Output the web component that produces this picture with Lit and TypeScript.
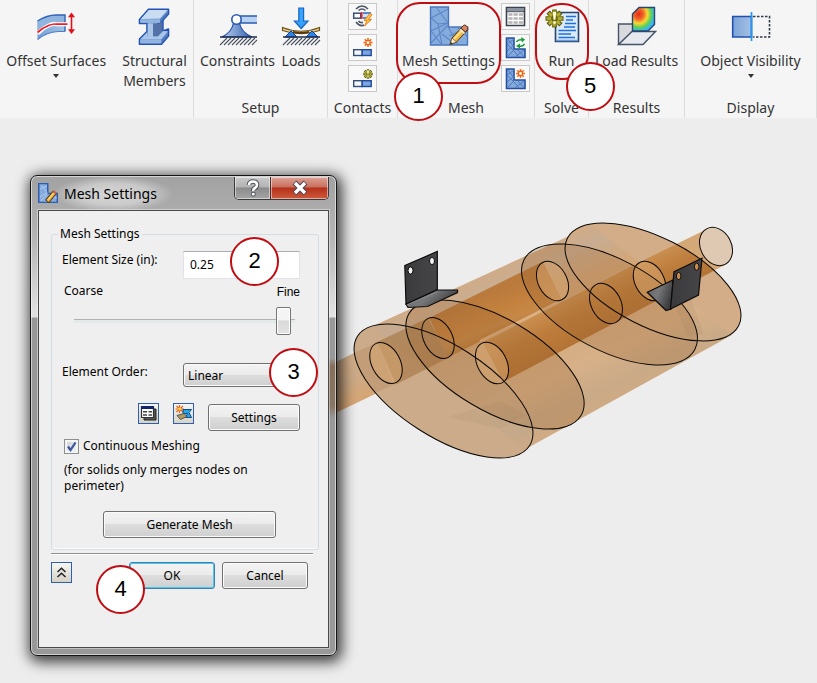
import { LitElement, html, css, svg } from "lit";
import { customElement, property, state } from "lit/decorators.js";

/* ---------- icons ---------- */

const hatch = svg`
  <path d="M2 31H39" stroke="#1d2a4a" stroke-width="1.4"/>
  <path d="M2 39l7-7M6 39l7-7M10 39l7-7M14 39l7-7M18 39l7-7M22 39l7-7M26 39l7-7M30 39l7-7M34 39l5-5" stroke="#4a5260" stroke-width="1.1"/>`;

const spark = (cx: number, cy: number) => svg`
  <g transform="translate(${cx} ${cy})" stroke="#f0701a" stroke-width="1.6">
    <path d="M0-4.500V4.500M-4.500 0H4.500M-3.200-3.200L3.200 3.200M-3.200 3.200L3.200-3.200"/>
    <circle r="2.2" fill="#fff2c8" stroke="#f05a14" stroke-width="1.2"/>
  </g>`;

const gearMark = (cx: number, cy: number, k: number) => svg`
  <g transform="translate(${cx} ${cy}) scale(${k})">
    <path d="M0-9V9M-9 0H9M-6.4-6.4L6.4 6.4M-6.4 6.4L6.4-6.4" stroke="#5f5a10" stroke-width="4.6"/>
    <circle r="6.6" fill="#8d8a1c"/>
    <path d="M0-8V8M-8 0H8M-5.6-5.6L5.6 5.6M-5.6 5.6L5.6-5.6" stroke="#b3b036" stroke-width="2.4"/>
    <circle r="3.4" fill="#6b6812"/>
    <path d="M-1.7-6.5H1.7L1 1.2H-1z" fill="#fffbd0"/>
    <circle cy="4" r="1.4" fill="#fffbd0"/>
  </g>`;

const contactPair = svg`
  <rect x="2.700" y="14.700" width="8.500" height="5.800" fill="#f4f6fb" stroke="#35507c" stroke-width="1.4"/>
  <rect x="11.200" y="14.700" width="9" height="5.800" fill="#7da4e0" stroke="#1c4a9c" stroke-width="1.4"/>`;

const meshL = (extra: unknown) => svg`
  <path d="M2.500 3h7.500v11h11v8.500H2.500z" fill="#84a9dc" stroke="#24509f" stroke-width="1.6"/>
  <path d="M3 9l7-5M3 16l7-6M4 4l6 8M3 9l8 8 4 5M3 22l8-8M11 22l9-7M14 15l6 7" stroke="#4e7bc0" stroke-width="1" fill="none"/>
  ${extra}`;

const pencil = svg`
  <path d="M21 38.5l2-6.5 11.5-12.5 4.5 4L27.500 36z" fill="#f4b73c" stroke="#4c3514" stroke-width="1"/>
  <path d="M24.800 33.500L35.500 21.500" stroke="#ffe39a" stroke-width="1.8"/>
  <path d="M32 22.200l2.600-2.800q1-1.200 3 .6t1.200 3.200l-2.500 2.700z" fill="#d9826c" stroke="#4c3514"/>
  <path d="M30.800 23.500l4.600 4" stroke="#e8e8e8" stroke-width="1.6"/>
  <path d="M23 32l4.500 4-6.500 2.500z" fill="#fbeccb" stroke="#6b5020" stroke-width=".7"/>
  <path d="M21 38.500l.8-2.600 1.800 1.600z" fill="#222"/>`;

const bigMesh = svg`
  <path d="M1.500 1h18v20h19v18H1.500z" fill="#86abdd" stroke="#4a76bb" stroke-width="1.400"/>
  <path d="M2 12l17-9M7 1l12 16M2 12l7 6 10-1M2 25l17-8M9 18l4 21M2 25l11 14M2 37l17-18M13 28l14 11M19 21l10 18M20 30l18-8M28 21l10 9" stroke="#5c87c7" stroke-width="1.100" fill="none"/>`;

const big: Record<string, unknown> = {
  offset: svg`
    <defs><linearGradient id="os" x1="0" y1="1" x2="1" y2="0"><stop offset="0" stop-color="#6d9bd2"/><stop offset="1" stop-color="#b9d2ec"/></linearGradient></defs>
    <path d="M1.500 15Q11 9 20 9H29V25.500H22Q11 26 1.500 33.500z" fill="url(#os)"/>
    <path d="M1.500 15Q11 9 20 9H29V16.500H20Q11 17 1.500 24z" fill="#8fb4de"/>
    <path d="M1.500 15Q11 9 20 9H29V25.500" fill="none" stroke="#2f62b8" stroke-width="1.400"/>
    <path d="M1.500 33.500Q11 26 22 25.500H29" fill="none" stroke="#4f7fc6" stroke-width="1.200"/>
    <path d="M1.500 27.500Q7 22 12.500 19.500T20 18.200H31.500" fill="none" stroke="#fff" stroke-width="4"/>
    <path d="M1.500 26.500Q7 21.500 12.500 19.500T20 18.200H31.500" fill="none" stroke="#f01c24" stroke-width="1.700"/>
    <path d="M35.500 10V26" stroke="#e0101c" stroke-width="1.600"/>
    <path d="M35.500 6.500l3.500 4.700h-7zM35.500 28l3.500-4.700h-7z" fill="#e0101c"/>`,
  beam: svg`
    <path d="M5.500 13.500L14.500 3.200H34.500V8L26 17.500H24V26H26L34.500 23V30L27.500 38.200H5.500V33L13 25.500V17.500H5.500z" fill="#7c9fd2" stroke="#2253b4" stroke-width="1.600" stroke-linejoin="round"/>
    <path d="M6.800 13L14.800 4H33.500L26 12.500z" fill="#c9dcf2"/>
    <path d="M6.200 13.500H26V16.800H6.200z" fill="#92b4e0"/>
    <path d="M26 13.500L33.800 5V8L26 16.800z" fill="#4d78bb"/>
    <path d="M18.500 17.500H25.500L29 14V25L24 30.500H18.500z" fill="#5272a8"/>
    <path d="M29 14V25" stroke="#2253b4" stroke-width="1.400"/>
    <path d="M13.700 17.500H19V31H13.700z" fill="#a9c5e8"/>
    <path d="M13 26.500L6.500 33H27.500L33.500 25.500 29 25 24 30.500H13z" fill="#a9c6ea"/>
    <path d="M6.200 33.500H27V37.300H6.200z" fill="#92b4e0"/>
    <path d="M27.500 33.500L33.800 26.500V30L27.500 37.300z" fill="#4d78bb"/>`,
  constraint: svg`
    <defs><linearGradient id="cn" x1="0" x2="1"><stop offset="0" stop-color="#bcd0ee"/><stop offset="1" stop-color="#3262ad"/></linearGradient></defs>
    <path d="M20 10H39V17H20z" fill="#b8d2f2"/>
    <path d="M22 10H39M22 17H39" stroke="#2a5cb4" stroke-width="1.500"/>
    <path d="M4 31Q14 26 15.500 17H21.500Q23 26 34 31z" fill="url(#cn)" stroke="#2550a8" stroke-width="1.200"/>
    <circle cx="18.500" cy="13.500" r="4.700" fill="#fff" stroke="#2858b2" stroke-width="1.600"/>
    ${hatch}`,
  load: svg`
    <path d="M1.500 21.500Q20 29 38.500 21.500V24.500Q20 31 1.500 24.500z" fill="#e9cf94" stroke="#6f5418" stroke-width="1.200"/>
    <path d="M12 26Q20 28 28 26" stroke="#5a3a10" stroke-width="2" fill="none"/>
    <path d="M4 31L10 25 16 31zM25 31L31 25 37 31z" fill="#2f86ea" stroke="#12459c" stroke-width="1"/>
    <path d="M17.800 2H22.600V15H27L20.200 22.500 13.400 15H17.800z" fill="#36a2fa" stroke="#1766c4" stroke-width="1.200"/>
    ${hatch}`,
  mesh: svg`${bigMesh}${pencil}`,
  run: svg`
    <path d="M12.500 6.500H36.500V35.500H13.500V20z" fill="#d9e9fa" stroke="#27466f" stroke-width="1.600"/>
    <path d="M14 34.500H36" stroke="#6f9bd6" stroke-width="1.500"/>
    <path d="M24 10.500H34M24 14H31M23 17.500H34M22 21H33M16.500 24.500H34M16.500 28H29M16.500 31.500H33" stroke="#1e70e2" stroke-width="1.500"/>
    ${gearMark(12.5, 12.5, 1)}`,
  results: svg`
    <defs><radialGradient id="rs" cx=".28" cy=".28" r="1"><stop offset="0" stop-color="#e22a18"/><stop offset=".22" stop-color="#f0662a"/><stop offset=".4" stop-color="#f8d832"/><stop offset=".58" stop-color="#58cf5a"/><stop offset=".72" stop-color="#3cb8f0"/><stop offset="1" stop-color="#2a7af0"/></radialGradient></defs>
    <path d="M1.500 18H20V27L1.500 38z" fill="#d8dade" stroke="#44536a" stroke-width="1.400"/>
    <path d="M1.500 38.500L15 25.500H38.500L26 38.500z" fill="#e6e9ee" stroke="#44536a" stroke-width="1.500"/>
    <path d="M15.500 8L22 1.500H37.500V18.500L31 25H15.500z" fill="url(#rs)" stroke="#27466f" stroke-width="1.400"/>`,
  visibility: svg`
    <defs><linearGradient id="ov" x1="0" x2="1"><stop offset="0" stop-color="#7ba4d8"/><stop offset="1" stop-color="#a5c1e4"/></linearGradient></defs>
    <path d="M1.700 10.500H20.500V31H1.700z" fill="url(#ov)" stroke="#2350b0" stroke-width="1.600"/>
    <path d="M22 10.500H38.500V31H22" fill="none" stroke="#333b48" stroke-width="1.600" stroke-dasharray="2.500 1.500"/>
    <path d="M20.500 6V35" stroke="#2196f3" stroke-width="1.700"/>`,
};

const small: Record<string, unknown> = {
  autoContact: svg`
    <path d="M5 5Q11-1 17 5M7.500 6.500Q11 3.500 14.500 6.500M5 18Q9 23 13 21M7.500 17Q9 19 12 18.500" stroke="#4c5563" stroke-width="1.600" fill="none"/>
    <rect x="2.700" y="9.200" width="7" height="5" fill="#fff" stroke="#3b527c" stroke-width="1.500"/>
    <path d="M12 8.500H20V14.500H12z" fill="#cfe2f7"/><path d="M12 9H20M12 14H17" stroke="#2d69c5" stroke-width="1.300"/>
    <path d="M10.800 8V15" stroke="#f01818" stroke-width="1.600"/>
    <path d="M19 9.500L13 16.500H16L13.500 22 20.500 15.500H17.500L21 10.500z" fill="#ffc34d" stroke="#e57a12" stroke-width=".9"/>`,
  newContact: svg`${contactPair}${spark(17, 7.5)}`,
  manualContact: svg`${contactPair}${gearMark(17, 8, 0.52)}`,
  table: svg`
    <path d="M2.500 3.500H20.500V21.500H2.500z" fill="#fff" stroke="#39424e" stroke-width="1.600"/>
    <path d="M3 4H20V7H3z" fill="#8a939f"/><path d="M2 7.700H21" stroke="#39424e" stroke-width="1"/>
    <path d="M4.300 10.500H8.500M9.500 10.500H13.800M14.800 10.500H19M4.300 14.500H8.500M9.500 14.500H13.800M14.800 14.500H19M4.300 18.500H8.500M9.500 18.500H13.800M14.800 18.500H19" stroke="#b4b4b4" stroke-width="2.600"/>`,
  meshRefresh: meshL(svg`
    <path d="M12.500 7Q14 4 18 5" stroke="#1c9a3a" stroke-width="1.600" fill="none"/><path d="M17 2L21 4.500 18 7.500z" fill="#1c9a3a"/>
    <path d="M20.500 9Q18.500 12 15 11" stroke="#1c9a3a" stroke-width="1.600" fill="none"/><path d="M16 8.500L12 11 16 13.500z" fill="#1c9a3a"/>`),
  meshNew: meshL(spark(16.5, 7.5)),
};

/* ---------- callout ---------- */

@customElement("step-mark")
class StepMark extends LitElement {
  @property() n = "";
  static styles = css`
    :host {
      position: absolute;
      z-index: 5;
      box-sizing: border-box;
      width: 49px;
      height: 49px;
      border: 2px solid #c00d12;
      border-radius: 50%;
      background: #fff;
      color: #000;
      font: 22px/44px "Liberation Sans", Arial, sans-serif;
      text-align: center;
      pointer-events: none;
    }
  `;
  render() {
    return html`${this.n}`;
  }
}

/* ---------- ribbon ---------- */

@customElement("ribbon-bar")
class RibbonBar extends LitElement {
  static styles = css`
    :host {
      display: grid;
      grid-template-columns: 194fr 134fr 70fr 137fr 54fr 96fr 132fr;
      min-height: 118px;
      background: #f5f5f5;
      position: relative;
      z-index: 2;
      font: 14px/20px "Noto Sans", "Open Sans", sans-serif;
      color: #333;
    }
    .group {
      display: flex;
      flex-direction: column;
      justify-content: space-between;
      border-right: 1px solid #dcdcdc;
      min-width: 0;
    }
    .tools {
      display: flex;
      justify-content: center;
      gap: 6px;
    }
    .wide {
      gap: 16px;
    }
    .caption {
      text-align: center;
      white-space: nowrap;
    }
    .slot {
      position: relative;
      padding-top: 6px;
    }
    .tool {
      display: flex;
      flex-direction: column;
      align-items: center;
      min-width: 40px;
      padding: 0;
      border: 0;
      background: none;
      color: inherit;
      font: inherit;
      white-space: pre-line;
    }
    .tool svg {
      width: 40px;
      height: 40px;
      margin-bottom: 5px;
      fill: none;
    }
    .drop {
      border: 3px solid transparent;
      border-top: 4px solid #333;
      border-bottom: 0;
      margin-top: 3px;
    }
    .stack {
      display: flex;
      flex-direction: column;
      gap: 4px;
      padding-top: 3px;
    }
    .mini {
      display: flex;
      align-items: center;
      justify-content: center;
      width: 29px;
      height: 27px;
      padding: 0;
      border: 1px solid #c9c9c9;
      background: #f9f9f9;
    }
    .mini svg {
      width: 23px;
      height: 25px;
      fill: none;
    }
    .ring {
      position: absolute;
      box-sizing: border-box;
      border: 2px solid #c00d12;
      pointer-events: none;
      z-index: 3;
    }
    .ring-mesh {
      inset: 2px -6px auto -6px;
      height: 82px;
      border-radius: 24px;
    }
    .ring-run {
      inset: 3px -7px auto -7px;
      height: 77px;
      border-radius: 26px;
    }
    .mark-mesh {
      left: -8px;
      top: 72px;
    }
    .mark-run {
      left: 24px;
      top: 62px;
    }
  `;
  private tool(icon: string, label: string, drop = false) {
    return html`<button class="tool" type="button">
      <svg viewBox="0 0 40 40" aria-hidden="true">${big[icon]}</svg><span>${label}</span>${drop ? html`<i class="drop"></i>` : ""}
    </button>`;
  }
  private stack(items: [string, string][]) {
    return html`<div class="stack">
      ${items.map(
        ([icon, name]) => html`<button class="mini" type="button" aria-label=${name}><svg viewBox="0 0 23 25">${small[icon]}</svg></button>`,
      )}
    </div>`;
  }
  render() {
    return html`
      <div class="group">
        <div class="tools wide">
          <div class="slot">${this.tool("offset", "Offset Surfaces", true)}</div>
          <div class="slot">${this.tool("beam", "Structural\nMembers")}</div>
        </div>
      </div>
      <div class="group">
        <div class="tools">
          <div class="slot">${this.tool("constraint", "Constraints")}</div>
          <div class="slot">${this.tool("load", "Loads")}</div>
        </div>
        <div class="caption">Setup</div>
      </div>
      <div class="group">
        <div class="tools">
          ${this.stack([["autoContact", "Automatic contacts"], ["newContact", "New contact"], ["manualContact", "Manual contact"]])}
        </div>
        <div class="caption">Contacts</div>
      </div>
      <div class="group">
        <div class="tools">
          <div class="slot">
            ${this.tool("mesh", "Mesh Settings")}
            <span class="ring ring-mesh"></span>
            <step-mark class="mark-mesh" n="1"></step-mark>
          </div>
          ${this.stack([["table", "Mesh table"], ["meshRefresh", "Update mesh"], ["meshNew", "Generate mesh"]])}
        </div>
        <div class="caption">Mesh</div>
      </div>
      <div class="group">
        <div class="tools">
          <div class="slot">
            ${this.tool("run", "Run")}
            <span class="ring ring-run"></span>
            <step-mark class="mark-run" n="5"></step-mark>
          </div>
        </div>
        <div class="caption">Solve</div>
      </div>
      <div class="group">
        <div class="tools"><div class="slot">${this.tool("results", "Load Results")}</div></div>
        <div class="caption">Results</div>
      </div>
      <div class="group">
        <div class="tools"><div class="slot">${this.tool("visibility", "Object Visibility", true)}</div></div>
        <div class="caption">Display</div>
      </div>
    `;
  }
}

/* ---------- 3D model ---------- */

type Oval = [number, number, number, number, number];
const tubeEnds: Oval[] = [
  [443.5, 391, 102, 45.6, 32.5],
  [495, 364.5, 100, 46, 30.7],
  [609.5, 304.5, 96.5, 45.7, 27.8],
  [653, 282, 96.2, 44.3, 27.1],
];
const holes: Oval[] = [
  [386, 363, 22, 14.2, 62],
  [438, 338, 22, 14.2, 62],
  [492, 363, 22.2, 14.6, 62],
  [552.5, 281, 21, 14.4, 62],
  [606, 303.5, 21.4, 14.8, 62],
  [649.5, 281, 21, 14.6, 62],
  [716, 246.5, 20, 15.4, 62],
];
const oval = ([cx, cy, a, b, r]: Oval, cls: string) =>
  svg`<ellipse class=${cls} cx=${cx} cy=${cy} rx=${a} ry=${b} transform="rotate(${r} ${cx} ${cy})"></ellipse>`;

@customElement("model-view")
class ModelView extends LitElement {
  static styles = css`
    :host,
    .scene {
      display: block;
    }
    .scene {
      width: 100%;
      height: auto;
    }
    .skin {
      fill: #d2ad88;
    }
    .edge {
      fill: none;
      stroke: #0a0805;
      stroke-width: 1;
    }
    .cap {
      fill: #96612d;
      fill-opacity: 0.26;
    }
    .near {
      fill: #a8a49c;
      fill-opacity: 0.14;
    }
    .bore {
      fill: #d8a872;
      fill-opacity: 0.5;
    }
    .tip {
      fill: #dfc9b3;
    }
    .plate {
      fill: url(#steel);
      stroke: #0c0c0c;
      stroke-width: 1.2;
    }
    .flange {
      fill: url(#steel2);
      stroke: #0c0c0c;
      stroke-width: 1.2;
    }
  `;
  render() {
    const [a, b, c, d] = tubeEnds;
    return html`<svg class="scene" viewBox="0 118 817 565" role="img" aria-label="Tube assembly with brackets">
      <defs>
        <linearGradient id="rod" gradientUnits="userSpaceOnUse" x1="485" y1="295" x2="503" y2="338">
          <stop offset="0" stop-color="#b97a3c" /><stop offset=".4" stop-color="#c4813e" />
          <stop offset=".7" stop-color="#c68846" /><stop offset="1" stop-color="#b57637" />
        </linearGradient>
        <linearGradient id="rod2" gradientUnits="userSpaceOnUse" x1="560" y1="306" x2="580" y2="345">
          <stop offset="0" stop-color="#c88c4c" /><stop offset=".4" stop-color="#bd7c3b" /><stop offset="1" stop-color="#b37334" />
        </linearGradient>
        <linearGradient id="stub" gradientUnits="userSpaceOnUse" x1="350" y1="355" x2="370" y2="395">
          <stop offset="0" stop-color="#d4b08b" /><stop offset=".5" stop-color="#ccaa86" /><stop offset="1" stop-color="#d6a574" />
        </linearGradient>
        <linearGradient id="tube" gradientUnits="userSpaceOnUse" x1="480" y1="270" x2="560" y2="440">
          <stop offset="0" stop-color="#d2ab84" /><stop offset=".12" stop-color="#c9ad92" /><stop offset=".3" stop-color="#d3a677" />
          <stop offset=".68" stop-color="#d7b088" /><stop offset=".86" stop-color="#c9aa87" /><stop offset="1" stop-color="#d5ab81" />
        </linearGradient>
        <linearGradient id="steel" x1="0" x2="1"><stop offset="0" stop-color="#3a3a3c" /><stop offset="1" stop-color="#464648" /></linearGradient>
        <linearGradient id="steel2" x1="0" x2="1" y2=".4"><stop offset="0" stop-color="#606062" /><stop offset=".5" stop-color="#77787a" /><stop offset="1" stop-color="#3c3c3e" /></linearGradient>
        <clipPath id="inA"><ellipse cx="443.500" cy="391" rx="102" ry="45.600" transform="rotate(32.500 443.500 391)" /></clipPath>
        <clipPath id="inTube">
          <path d="M372 326L592 225.500 653 282 690 330 524 450z" />
          <ellipse cx="653" cy="282" rx="96.200" ry="44.300" transform="rotate(27.100 653 282)" />
        </clipPath>
      </defs>

      <path d="M300 380L377 341.500 396 384 300 430z" fill="url(#stub)" />
      <path d="M640 262L706 229.500 727 264 655 300z" fill="#d5a878" />
      ${oval(a, "skin")}${oval(d, "skin")}
      <path d="M372 326.500L592 225.500 732 335 524 450z" fill="url(#tube)" />

      <path d="M377 342L428 318 449 357.500 396 384.500z" fill="#a9763f" fill-opacity=".72" />
      <path d="M340 360L377 342 394 384.500 340 409z" fill="#b07a42" fill-opacity=".3" clip-path="url(#inA)" />
      <path d="M429 318L543 261.500 562 300 448 357.500z" fill="url(#rod)" />
      <path d="M483 342.500L640 262 712 226.500 727 264 658 300 503 382z" fill="url(#rod2)" clip-path="url(#inTube)" />
      <path d="M480 341L558 302" stroke="#deb184" stroke-width="2" />
      <path d="M448 417L500 401 527 415 500 429z" fill="#8f7a5e" fill-opacity=".12" />
      <path d="M674 305L690 297 704 334 688 336z" fill="#8a7a66" fill-opacity=".12" />

      ${oval(a, "near")}${oval(b, "cap")}${oval(c, "cap")}
      ${[0, 2, 3, 5].map((i) => oval(holes[i], "bore"))}
      ${oval(holes[6], "tip")}
      ${[a, b, c, d].map((o) => oval(o, "edge"))}
      ${holes.map((o) => oval(o, "edge"))}

      <path class="flange" d="M406 304L436.500 290H457.500V292.500L427.500 306.500 408 307.500z" />
      <path class="plate" d="M404.800 265.500L437.300 251.500V289.500L406 304z" />
      <path d="M407 305L437 292" stroke="#8a8a8c" />
      <ellipse cx="410.500" cy="270.500" rx="2.500" ry="3.600" fill="#f4f4f4" stroke="#0c0c0c" />
      <ellipse cx="432" cy="261" rx="2.500" ry="3.600" fill="#f4f4f4" stroke="#0c0c0c" />

      <path class="flange" d="M647.300 292.300L673 280 671 309 666 310.500z" />
      <path class="plate" d="M674 271.700L702 258.300 698.500 295 670.500 309z" />
      <ellipse cx="678.700" cy="276" rx="2.300" ry="3.600" fill="#c98b4c" stroke="#0c0c0c" />
      <ellipse cx="696.700" cy="266.700" rx="2.300" ry="3.600" fill="#c98b4c" stroke="#0c0c0c" />
    </svg>`;
  }
}

/* ---------- dialog ---------- */

@customElement("mesh-dialog")
class MeshDialog extends LitElement {
  @state() private continuous = true;
  static styles = css`
    :host {
      display: block;
      box-sizing: border-box;
      width: 307px;
      padding: 0 7px 7px;
      border: 1px solid #141414;
      border-radius: 7px;
      background:
        linear-gradient(rgba(125, 95, 65, 0), rgba(125, 95, 65, 0.7) 8px, rgba(125, 95, 65, 0.6) 48px, rgba(125, 95, 65, 0)) right 182px / 7px 60px no-repeat,
        radial-gradient(60px 18px at 82px 18px, rgba(235, 235, 235, 0.7), rgba(235, 235, 235, 0.5) 60%, transparent) 0 0 / 100% 34px no-repeat,
        linear-gradient(#a2a2a2, #acacac 34px, #b4b4b4 60px, #e2e2e2 141px, #989898 142px);
      box-shadow:
        inset 0 0 0 1px rgba(255, 255, 255, 0.55),
        2px 3px 14px 3px rgba(0, 0, 0, 0.75);
      font: 12px/16px "Noto Sans", "DejaVu Sans", sans-serif;
      color: #000;
    }
    .title {
      display: flex;
      height: 34px;
      align-items: flex-start;
    }
    .title svg {
      width: 20px;
      height: 20px;
      margin-top: 7px;
      fill: none;
    }
    .title h1 {
      flex: 1;
      margin: 0;
      padding: 8px 0 0 6px;
      font-size: 14px;
      line-height: 20px;
      font-weight: 400;
    }
    .sys {
      display: flex;
      box-sizing: border-box;
      margin-top: 1px;
      border: 1px solid #3a3a3a;
      border-top: 0;
      border-radius: 0 0 5px 5px;
      overflow: hidden;
    }
    .sys button {
      display: flex;
      align-items: center;
      justify-content: center;
      padding: 0;
      border: 0;
      height: 22px;
      width: 35px;
      background: linear-gradient(#c9c9c9, #b4b4b4 45%, #8b8b8b 50%, #a5a5a5);
      box-shadow: inset 0 0 0 1px rgba(255, 255, 255, 0.5);
    }
    .sys .close {
      width: 58px;
      border-left: 1px solid #4a2a26;
      background: linear-gradient(#dca296, #c9705f 45%, #b5301a 50%, #cf5a3c);
    }
    .sys svg {
      width: 16px;
      height: 18px;
      margin: 0;
      fill: none;
    }
    .client {
      box-sizing: border-box;
      min-height: 438px;
      padding: 15px 9px 0 12px;
      border: 1px solid #4a4a4a;
      background: #efefef;
      box-shadow: 0 0 0 1px rgba(255, 255, 255, 0.4);
    }
    fieldset {
      margin: 0;
      padding: 0 18px 11px 10px;
      border: 1px solid #d3dde6;
      border-radius: 3px;
      min-width: 0;
      box-shadow: inset 0 -1px 0 #fff;
    }
    legend {
      margin-left: -4px;
      padding: 0 2px;
    }
    .row {
      display: flex;
      align-items: flex-start;
      justify-content: space-between;
    }
    .size {
      padding-top: 9px;
    }
    .row > label {
      padding-top: 1px;
    }
    .size input {
      box-sizing: border-box;
      width: 117px;
      height: 28px;
      padding: 0 6px 2px;
      border: 1px solid #e2e3ea;
      border-top-color: #abadb3;
      background: #fff;
      color: inherit;
      font: inherit;
    }
    .field {
      position: relative;
      display: flex;
    }
    .ends {
      padding: 3px 0 0 2px;
    }
    .fine {
      font: 12px/20px "Liberation Sans", Arial, sans-serif;
    }
    .slider {
      display: block;
      appearance: none;
      width: 221px;
      height: 28px;
      margin: 5px 0 0 12px;
      background: linear-gradient(#b0b2b4, #b0b2b4) 0 12px / 100% 1px no-repeat, linear-gradient(#e4eaea, #e4eaea) 0 13px / 100% 3px no-repeat;
    }
    .slider::-webkit-slider-thumb {
      appearance: none;
      box-sizing: border-box;
      width: 15px;
      height: 28px;
      border: 1px solid #757575;
      border-radius: 2px;
      background: linear-gradient(#f4f4f4 45%, #dadada 50%, #e2e2e2);
      box-shadow: inset 0 0 0 1px #fff;
    }
    .order {
      padding-top: 28px;
    }
    select,
    .btn {
      appearance: none;
      box-sizing: border-box;
      border: 1px solid #707070;
      border-radius: 3px;
      background: linear-gradient(#f3f3f3, #ebebeb 49%, #dddddd 50%, #cfcfcf);
      box-shadow: inset 0 0 0 1px #fbfbfb;
      color: inherit;
      font: inherit;
    }
    select {
      width: 117px;
      height: 24px;
      padding: 1px 4px 0;
    }
    .btn {
      height: 27px;
      padding: 1px 0 0;
    }
    .more {
      justify-content: flex-end;
      padding-top: 16px;
      gap: 14px;
    }
    .settings {
      width: 92px;
      margin-top: 1px;
    }
    .chip {
      box-sizing: border-box;
      display: flex;
      width: 21px;
      height: 21px;
      padding: 0;
      border: 1px solid #2f5fae;
      background: linear-gradient(#f6f6f2, #d6d3c6);
    }
    .chip svg {
      width: 19px;
      height: 19px;
      fill: none;
    }
    .tick {
      display: flex;
      align-items: center;
      gap: 4px;
      padding: 7px 0 8px 2px;
      position: relative;
    }
    .tick input {
      appearance: none;
      box-sizing: border-box;
      width: 15px;
      height: 15px;
      margin: 0;
      border: 1px solid #8e8f8f;
      background: linear-gradient(135deg, #cbcfd5, #f6f6f6);
      box-shadow: inset 0 0 0 2px #f4f4f4;
    }
    .tick svg {
      position: absolute;
      left: 2px;
      width: 15px;
      height: 15px;
      fill: none;
      pointer-events: none;
    }
    .note {
      margin: 0;
      padding-left: 2px;
    }
    .generate {
      display: block;
      width: 173px;
      margin: 17px auto 0 41px;
    }
    hr {
      margin: 3px 6px 7px 0;
      border: 0;
      border-top: 1px solid #8f8f8f;
      border-bottom: 1px solid #fff;
    }
    .actions {
      display: flex;
      gap: 7px;
      padding-right: 11px;
    }
    .actions .chip {
      margin-right: auto;
    }
    .actions .btn {
      width: 86px;
    }
    .actions .ok {
      border-color: #3c7fb1;
      box-shadow: inset 0 0 0 1px #4cc8ee;
    }
    .mark-size {
      left: 47px;
      top: -14px;
    }
    .mark-order {
      left: 86px;
      top: -15px;
    }
    .mark-ok {
      left: -33px;
      top: 3px;
    }
  `;
  render() {
    return html`
      <div class="title">
        <svg viewBox="0 0 40 40" aria-hidden="true">
          <path d="M1.500 1h18v20h19v18H1.500z" fill="#86abdd" stroke="#2f5fb0" stroke-width="3" />
          <path d="M4 12l14-6M6 4l12 14M4 28l15-9M6 36l13-15M24 26l14 4" stroke="#b9d2f2" stroke-width="1.500" />
          <path d="M18 37L34 18" stroke="#4c3514" stroke-width="10" />
          <path d="M19 36L34 18" stroke="#f4b73c" stroke-width="6" />
          <path d="M20 33L31 20" stroke="#ffe9a8" stroke-width="2" />
          <path d="M32 20.500L35 17" stroke="#c8604c" stroke-width="7" />
        </svg>
        <h1>Mesh Settings</h1>
        <div class="sys">
          <button type="button" aria-label="Help">
            <svg viewBox="0 0 16 18"><path d="M4 6Q4 2.500 8 2.500T12 6Q12 8 10 9T8.300 12" stroke="#50545e" stroke-width="4.600" /><circle cx="8.300" cy="15.200" r="2.400" fill="#50545e" /><path d="M4 6Q4 2.500 8 2.500T12 6Q12 8 10 9T8.300 12" stroke="#fff" stroke-width="2.600" /><circle cx="8.300" cy="15.200" r="1.400" fill="#fff" /></svg>
          </button>
          <button class="close" type="button" aria-label="Close">
            <svg viewBox="0 0 16 18"><path d="M2.500 3.500L13.500 14.500M13.500 3.500L2.500 14.500" stroke="#4e4a58" stroke-width="5.400" /><path d="M3 4L13 14M13 4L3 14" stroke="#fff" stroke-width="3.200" /></svg>
          </button>
        </div>
      </div>
      <div class="client">
        <fieldset>
          <legend>Mesh Settings</legend>
          <div class="row size">
            <label for="size">Element Size (in):</label>
            <div class="field">
              <input id="size" type="text" value="0.25" />
              <step-mark class="mark-size" n="2"></step-mark>
            </div>
          </div>
          <div class="row ends"><label for="grade">Coarse</label><span class="fine">Fine</span></div>
          <input class="slider" id="grade" type="range" min="0" max="100" value="98" />
          <div class="row order">
            <label for="order">Element Order:</label>
            <div class="field">
              <select id="order"><option>Linear</option><option>Parabolic</option></select>
              <step-mark class="mark-order" n="3"></step-mark>
            </div>
          </div>
          <div class="row more">
            <button class="chip" type="button" aria-label="Mesh table">
              <svg viewBox="0 0 19 19"><path d="M5 5H17V16H5z" fill="#555" stroke="#222" /><path d="M2.500 2.500H14.500V13.500H2.500z" fill="#fff" stroke="#333" stroke-width="1.200" /><path d="M2 2H15V5H2z" fill="#12246e" /><path d="M4 7.700H8M9.500 7.700H13M4 11H8M9.500 11H13" stroke="#444" stroke-width="1.400" /></svg>
            </button>
            <button class="chip" type="button" aria-label="New mesh">
              <svg viewBox="0 0 19 19"><path d="M5.500 1V9M1.500 5H10M2.500 2L9 8M9 2L2.500 8" stroke="#ee5a14" stroke-width="1.100" /><circle cx="5.700" cy="5" r="1.600" fill="#ffd84a" /><path d="M9 5.500H17.500L15 8.500 17.500 13.500H11.500L13.500 9.500H9z" fill="#28a6e4" stroke="#0c4a92" /><path d="M3 11.500L10 9.500 13 12.500 6.500 15.500z" fill="#b59a5a" stroke="#3a4a5c" stroke-width=".9" /></svg>
            </button>
            <button class="btn settings" type="button">Settings</button>
          </div>
          <label class="tick">
            <input type="checkbox" .checked=${this.continuous} @change=${(e: Event) => (this.continuous = (e.target as HTMLInputElement).checked)} />
            <svg viewBox="0 0 15 15">${this.continuous ? svg`<path d="M4 7.500L6.500 11 11.500 3.500" stroke="#3a539c" stroke-width="2.200"/>` : ""}</svg>
            Continuous Meshing
          </label>
          <p class="note">(for solids only merges nodes on<br />perimeter)</p>
          <button class="btn generate" type="button">Generate Mesh</button>
        </fieldset>
        <hr />
        <div class="actions">
          <button class="chip" type="button" aria-label="Collapse">
            <svg viewBox="0 0 19 19"><path d="M5.500 9L9.500 5.200 13.500 9M5.500 14L9.500 10.200 13.500 14" stroke="#222" stroke-width="1.500" /></svg>
          </button>
          <div class="field">
            <button class="btn ok" type="button">OK</button>
            <step-mark class="mark-ok" n="4"></step-mark>
          </div>
          <button class="btn" type="button">Cancel</button>
        </div>
      </div>
    `;
  }
}

/* ---------- page ---------- */

@customElement("app-root")
class AppRoot extends LitElement {
  static styles = css`
    :host {
      display: flex;
      flex-direction: column;
      min-height: 100vh;
      background: #ededed;
    }
    .stage {
      position: relative;
      flex: 1;
    }
    .window {
      position: absolute;
      left: 30px;
      top: 57px;
    }
  `;
  render() {
    return html`
      <ribbon-bar></ribbon-bar>
      <main class="stage">
        <model-view></model-view>
        <mesh-dialog class="window"></mesh-dialog>
      </main>
    `;
  }
}
